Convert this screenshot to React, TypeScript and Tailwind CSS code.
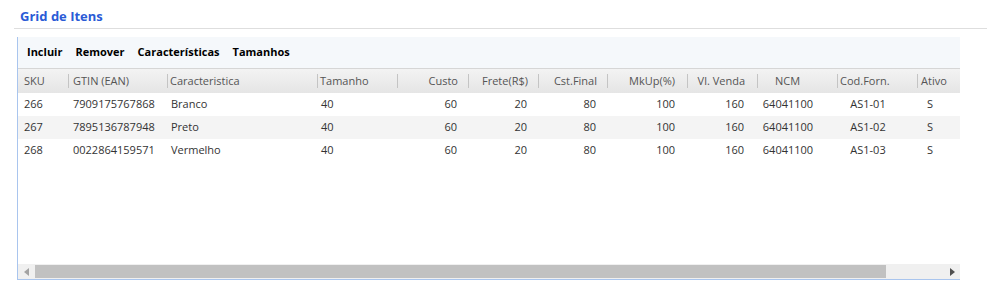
import React from 'react';

type Col = {
  key: string;
  label: string;
  width: string;
  head: string;
  cell: string;
};

const cols: Col[] = [
  { key: 'sku', label: 'SKU', width: 'w-[50px]', head: 'pl-[6px]', cell: 'pl-[6px]' },
  { key: 'gtin', label: 'GTIN (EAN)', width: 'w-[99px]', head: 'border-l pl-[4px]', cell: 'pl-[5px]' },
  { key: 'car', label: 'Caracteristica', width: 'w-[150px]', head: 'border-l pl-[2px]', cell: 'pl-[4px]' },
  { key: 'tam', label: 'Tamanho', width: 'w-[80px]', head: 'border-l pl-[2px]', cell: 'pl-[4px]' },
  { key: 'custo', label: 'Custo', width: 'w-[71px]', head: 'border-l text-right pr-[10px]', cell: 'text-right pr-[11px]' },
  { key: 'frete', label: 'Frete(R$)', width: 'w-[70px]', head: 'border-l text-right pr-[10px]', cell: 'text-right pr-[11px]' },
  { key: 'cst', label: 'Cst.Final', width: 'w-[69px]', head: 'border-l text-right pr-[10px]', cell: 'text-right pr-[11px]' },
  { key: 'mkup', label: 'MkUp(%)', width: 'w-[80px]', head: 'border-l text-right pr-[12px]', cell: 'text-right pr-[12px]' },
  { key: 'venda', label: 'Vl. Venda', width: 'w-[70px]', head: 'border-l text-right pr-[12px]', cell: 'text-right pr-[13px]' },
  { key: 'ncm', label: 'NCM', width: 'w-[80px]', head: 'border-l text-center pr-[20px]', cell: 'text-center pr-[18px]' },
  { key: 'forn', label: 'Cod.Forn.', width: 'w-[80px]', head: 'border-l pl-[2px]', cell: 'text-center pl-[2px] pr-[20px]' },
  { key: 'ativo', label: 'Ativo', width: 'w-[60px]', head: 'border-l pl-[3px]', cell: 'pl-[10px]' },
];

const rows: Record<string, string>[] = [
  { sku: '266', gtin: '7909175767868', car: 'Branco', tam: '40', custo: '60', frete: '20', cst: '80', mkup: '100', venda: '160', ncm: '64041100', forn: 'AS1-01', ativo: 'S' },
  { sku: '267', gtin: '7895136787948', car: 'Preto', tam: '40', custo: '60', frete: '20', cst: '80', mkup: '100', venda: '160', ncm: '64041100', forn: 'AS1-02', ativo: 'S' },
  { sku: '268', gtin: '0022864159571', car: 'Vermelho', tam: '40', custo: '60', frete: '20', cst: '80', mkup: '100', venda: '160', ncm: '64041100', forn: 'AS1-03', ativo: 'S' },
];

export default function App() {
  return (
    <div className="w-[1000px] h-[290px] bg-white font-['Open_Sans',sans-serif] text-[11px]">
      {/* titulo */}
      <div className="pt-[8px] pl-[14px] pr-[13px]">
        <div className="border-b border-[#dedede] pl-[6px] pb-[3px]">
          <h2 className="text-[13px] leading-[17px] font-bold text-[#2a5bd6]">Grid de Itens</h2>
        </div>
      </div>

      <div className="ml-[17px] mt-[8px] w-[943px] h-[243px] flex flex-col border-l border-b border-[#a9c5ee] overflow-hidden">
        {/* toolbar */}
        <div className="h-[31px] shrink-0 bg-[#f5f8fb] flex items-center gap-[13px] pl-[9px] font-bold text-black">
          <span>Incluir</span>
          <span>Remover</span>
          <span>Características</span>
          <span>Tamanhos</span>
        </div>

        {/* cabeçalho */}
        <div className="h-[25px] shrink-0 flex items-center border-t border-[#d6d6d6] bg-gradient-to-b from-[#f3f3f3] to-[#e5e5e5] text-[#555]">
          {cols.map((c) => (
            <div
              key={c.key}
              className={`${c.width} shrink-0 h-[14px] leading-[14px] whitespace-nowrap border-[#c4c4c4] ${c.head}`}
            >
              {c.label}
            </div>
          ))}
        </div>

        {/* linhas */}
        {rows.map((r, idx) => (
          <div
            key={r.sku}
            className={`h-[23px] shrink-0 flex items-center text-[#333] ${idx % 2 === 1 ? 'bg-[#f4f4f4]' : 'bg-white'}`}
          >
            {cols.map((c) => (
              <div key={c.key} className={`${c.width} shrink-0 whitespace-nowrap ${c.cell}`}>
                {r[c.key]}
              </div>
            ))}
          </div>
        ))}

        <div className="flex-1" />

        {/* barra de rolagem */}
        <div className="h-[15px] shrink-0 bg-[#f0f0f0] flex items-center">
          <div className="w-[17px] flex justify-center">
            <svg width="5" height="8" viewBox="0 0 5 8"><path d="M5 0 L0 4 L5 8 Z" fill="#a3a3a3" /></svg>
          </div>
          <div className="w-[851px] h-[13px] bg-[#c1c1c1]" />
          <div className="flex-1 flex justify-end pr-[5px]">
            <svg width="5" height="8" viewBox="0 0 5 8"><path d="M0 0 L5 4 L0 8 Z" fill="#505050" /></svg>
          </div>
        </div>
      </div>
    </div>
  );
}
